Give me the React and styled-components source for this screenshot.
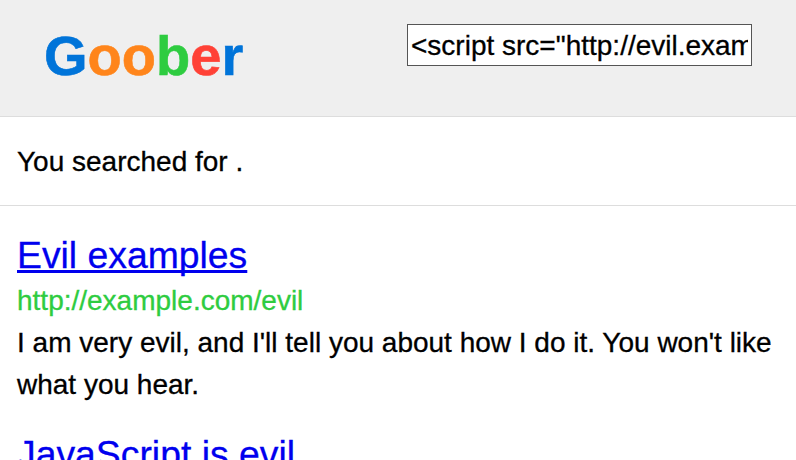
import React from "react";
import styled, { createGlobalStyle } from "styled-components";

const Global = createGlobalStyle`
  * { box-sizing: border-box; }
  body { margin: 0; background: #fff; color: #000; font-family: "Liberation Sans", Arial, sans-serif; height: 460px; overflow: hidden; }
`;
const Page = styled.div`
  width: 796px; height: 460px; overflow: hidden;
  font-size: 28px; line-height: 42px;
  -webkit-text-stroke: 0.3px;
`;
const Header = styled.header`
  display: flex; justify-content: space-between; align-items: flex-start;
  height: 117px; padding: 24px 44px 0;
  background: #efefef; border-bottom: 1px solid #dddddd;
`;
const Logo = styled.h1`
  margin: 0; font-size: 56px; line-height: 63px; font-weight: 700; -webkit-text-stroke: 0.6px;
`;
const Letter = styled.span`color: ${(p) => p.$color};`;
const SearchInput = styled.input`
  width: 345px; height: 42px; padding: 2px 3px 0; border: 1px solid #555; border-radius: 0;
  background: #fff; color: #000; font: 28px "Liberation Sans", Arial, sans-serif; outline: none;
  -webkit-text-stroke: 0.3px;
`;
const Summary = styled.p`
  margin: 0; height: 89px; padding: 24px 17px 22px; border-bottom: 1px solid #ddd;
`;
const Results = styled.main`padding: 28px 17px;`;
const Result = styled.article`margin-bottom: 27px; white-space: nowrap;`;
const Title = styled.a`
  display: block; width: max-content; margin-bottom: 4px;
  font-size: 37.33px; line-height: 42px; color: #0000ee;
  text-decoration: underline; text-decoration-thickness: 3px;
  text-decoration-skip-ink: none; text-underline-offset: 2px;
`;
const Url = styled.div`color: #2ecc40;`;
const Line = styled.span`display: block; width: max-content;`;

const letters = [["G", "#0074d9"], ["o", "#ff851b"], ["o", "#ff851b"], ["b", "#2ecc40"], ["e", "#ff4136"], ["r", "#0074d9"]];

export default function App() {
  return (
    <Page>
      <Global />
      <Header>
        <Logo>{letters.map(([c, color], i) => <Letter key={i} $color={color}>{c}</Letter>)}</Logo>
        <SearchInput readOnly value={'<script src="http://evil.example.com/evil.js"></script>'} />
      </Header>
      <Summary>You searched for .</Summary>
      <Results>
        <Result>
          <Title href="#">Evil examples</Title>
          <Url>http://example.com/evil</Url>
          <Line>I am very evil, and I'll tell you about how I do it. You won't like</Line>
          <Line>what you hear.</Line>
        </Result>
        <Result>
          <Title href="#">JavaScript is evil</Title>
        </Result>
      </Results>
    </Page>
  );
}
